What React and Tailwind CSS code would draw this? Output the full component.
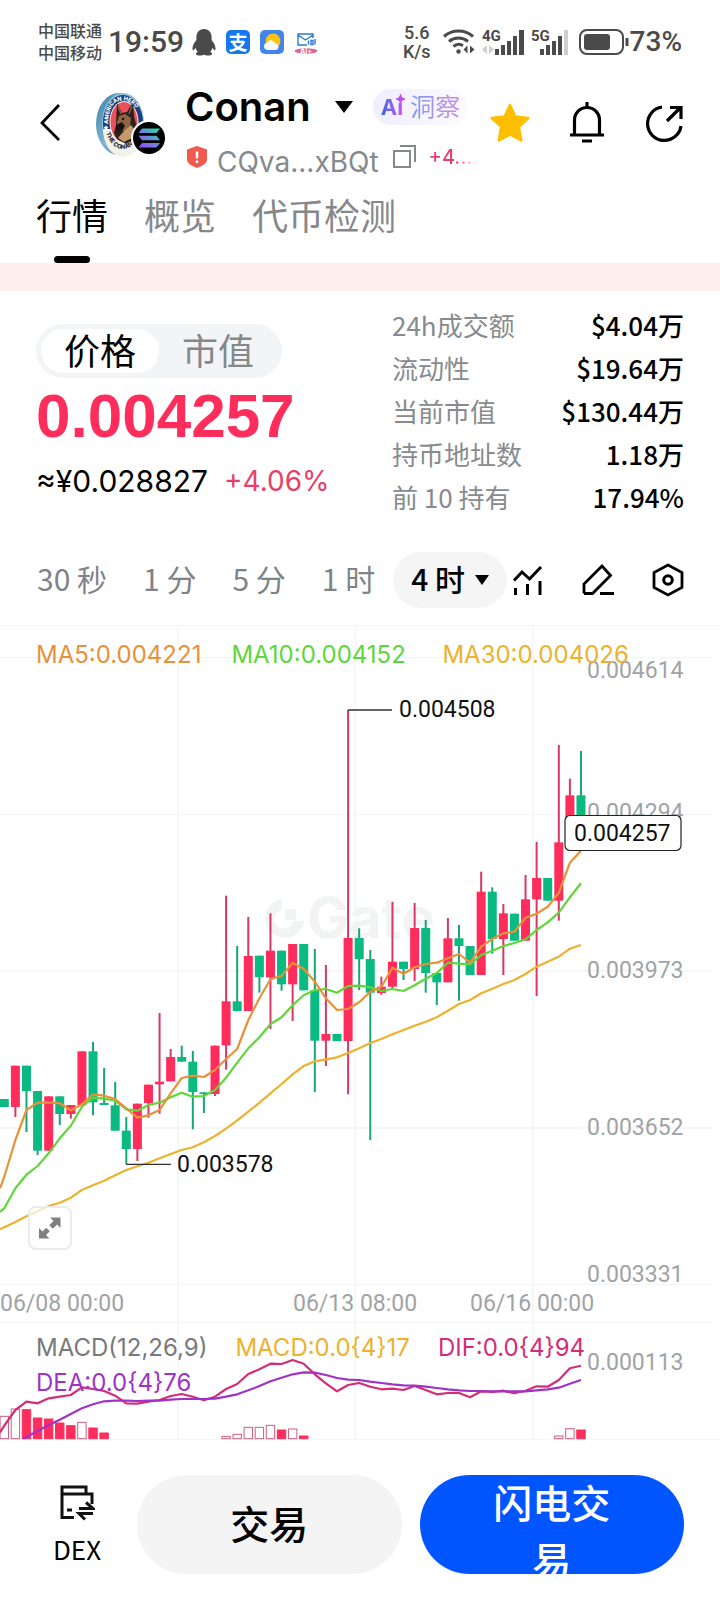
import React from 'react';

const RED = '#ff2d5c';
const GREEN = '#0aba80';
const STEP = 11.09;
const cx = (i) => 4.3 + i * STEP;
const py = (v) => 860 + v / 3;

// [rising, bodyTop, bodyBottom, high, low] in thirds of a unit, measured from y = 860
const CANDLES = [
  [0, 717, 741, 717, 741], [1, 617, 741, 617, 771], [0, 617, 693, 617, 816], [0, 693, 872, 693, 885],
  [1, 709, 872, 709, 872], [0, 709, 762, 709, 795], [1, 735, 762, 735, 776], [1, 574, 735, 574, 735],
  [0, 574, 727, 546, 766], [0, 729, 735, 624, 735], [0, 736, 812, 666, 812], [0, 812, 867, 771, 913],
  [1, 731, 867, 731, 903], [1, 674, 729, 674, 773], [1, 665, 673, 459, 761], [1, 591, 664, 567, 664],
  [0, 591, 605, 557, 605], [0, 605, 696, 573, 808], [0, 697, 702, 697, 759], [1, 557, 702, 557, 708],
  [1, 424, 556, 107, 629], [0, 424, 453, 258, 453], [1, 288, 453, 171, 453], [0, 287, 352, 287, 398],
  [1, 272, 352, 160, 507], [0, 272, 373, 272, 392], [1, 252, 373, 252, 483], [0, 252, 391, 252, 391],
  [0, 391, 542, 267, 696], [1, 522, 542, 315, 618], [0, 522, 543, 522, 543], [1, 234, 543, -450, 703],
  [0, 234, 297, 205, 390], [0, 297, 398, 270, 840], [1, 380, 399, 350, 404], [1, 305, 380, 126, 390],
  [0, 305, 327, 305, 360], [1, 204, 327, 129, 363], [0, 204, 339, 180, 398], [0, 339, 367, 339, 435],
  [1, 235, 367, 174, 367], [0, 235, 258, 195, 422], [0, 258, 345, 258, 345], [1, 95, 345, 35, 345],
  [0, 95, 237, 82, 281], [1, 160, 237, 132, 345], [0, 161, 242, 161, 242], [1, 118, 242, 45, 242],
  [1, 54, 118, -54, 408], [0, 54, 122, 54, 122], [1, -53, 122, -345, 182], [1, -194, -53, -244, -53],
  [0, -194, -82, -327, -82],
];

const MA5 = [950, 840, 750, 728, 727, 730, 751, 733, 703, 707, 717, 745, 773, 766, 750, 700, 654, 647, 651, 630, 597, 567, 480, 415, 358, 347, 309, 326, 365, 415, 450, 447, 427, 395, 380, 323, 341, 322, 312, 308, 295, 282, 308, 260, 237, 220, 215, 173, 161, 140, 98, 8, -28];
const MA10 = [1045, 985, 944, 918, 880, 835, 797, 740, 713, 716, 722, 748, 752, 735, 728, 712, 698, 710, 708, 690, 653, 608, 565, 532, 492, 472, 436, 406, 390, 387, 398, 378, 377, 382, 393, 387, 393, 376, 356, 339, 308, 311, 313, 285, 272, 258, 249, 238, 210, 187, 158, 112, 70];
const MA30 = [1102, 1086, 1069, 1054, 1038, 1028, 1013, 990, 976, 962, 946, 930, 919, 908, 895, 882, 870, 862, 847, 828, 806, 781, 755, 728, 700, 672, 643, 618, 604, 598, 592, 579, 565, 549, 537, 523, 510, 497, 485, 472, 452, 432, 420, 400, 386, 372, 360, 342, 320, 305, 290, 266, 255];
const DIF = [737, 690, 665, 670, 655, 650, 645, 622, 627, 633, 647, 670, 671, 665, 660, 648, 642, 650, 661, 650, 627, 612, 582, 568, 551, 552, 540, 551, 583, 610, 634, 615, 609, 620, 628, 626, 630, 618, 630, 643, 639, 639, 652, 634, 636, 632, 640, 632, 619, 620, 600, 565, 557];
const DEA = [null, null, 771, 753, 735, 719, 702, 685, 673, 664, 662, 662, 663, 662, 662, 659, 657, 657, 657, 656, 650, 643, 631, 618, 604, 593, 583, 577, 578, 585, 594, 599, 600, 605, 609, 613, 616, 617, 620, 624, 628, 631, 633, 633, 634, 634, 634, 634, 631, 628, 623, 611, 600];
// [index, top, filled]
const BARS = [
  [0, 709, 0], [1, 687, 0], [2, 689, 1], [3, 714, 1], [4, 717, 1], [5, 729, 1], [6, 737, 1], [7, 727, 0],
  [8, 744, 1], [9, 759, 1], [20, 769, 0], [21, 763, 0], [22, 742, 0], [23, 742, 0], [24, 736, 0],
  [25, 750, 1], [26, 747, 0], [27, 768, 1], [50, 768, 0], [51, 746, 0], [52, 750, 1],
];

const line = (values, base, lead) =>
  (lead ? lead + ' ' : '') +
  values.map((v, i) => (v === null ? '' : `${cx(i).toFixed(1)},${(base + v / 3).toFixed(1)}`)).filter(Boolean).join(' ');

function StatusBar() {
  return (
    <div className="flex h-[84px] items-center px-[38px] font-['Noto_Sans_CJK_SC',sans-serif] text-[#4a4a4a]">
      <div className="pb-[2px] text-[16px] leading-[22px] font-medium whitespace-nowrap">
        <div>中国联通</div>
        <div>中国移动</div>
      </div>
      <div className="ml-[6px] w-[76px] font-['Roboto',sans-serif] text-[30px] leading-[42px] font-medium">19:59</div>
      <div className="ml-2 flex items-center gap-[10px]">
        <svg width="24" height="28" viewBox="0 0 24 28" aria-hidden="true">
          <path fill="#4a4a4a" d="M12 1c-5 0-7.600 3.700-7.600 8.200v2.800C2.500 14.500.500 17.500.500 20.500c0 1.600.6 2 1.300 1.400.7-.5 1.300-1.400 1.700-2.100.4 1.700 1.200 3.100 2.300 4.200-1.300.5-1.900 1.100-1.900 1.800 0 1.500 2.300 1.700 4.300 1.700 1.700 0 3-.4 3.800-1.100.8.700 2.100 1.100 3.800 1.100 2 0 4.300-.2 4.300-1.700 0-.7-.6-1.300-1.900-1.800 1.100-1.100 1.900-2.500 2.300-4.200.4.700 1 1.600 1.700 2.100.7.600 1.300.2 1.300-1.400 0-3-2-6-3.900-8.500V9.200C19.600 4.700 17 1 12 1z" />
        </svg>
        <div className="flex h-6 w-6 items-center justify-center rounded-[5px] bg-[#1677ee] text-[19px] leading-6 font-bold text-white">支</div>
        <svg width="24" height="24" viewBox="0 0 24 24" aria-hidden="true">
          <rect width="24" height="24" rx="5" fill="#4284ea" />
          <circle cx="13" cy="11" r="7.500" fill="#ffc20d" />
          <path fill="#f5fbff" d="M7.500 20a3.700 3.700 0 0 1-.6-7.300 4.500 4.500 0 0 1 8.300.8A3.300 3.300 0 0 1 16 20z" />
        </svg>
        <svg width="24" height="24" viewBox="0 0 24 24" aria-hidden="true">
          <path d="M19 8V4H4v11h9M4 5l7.500 5L19 5M14.500 14.500v-4M17 14.500v-4h2v4zM21 9v5.500" fill="none" stroke="#2f7bd0" strokeWidth="1.400" />
          <ellipse cx="12" cy="21" rx="11.500" ry="2.800" fill="#d9698e" />
          <text x="6" y="23.500" fill="#fff" fontSize="7" fontWeight="700" fontFamily="Inter">AI+</text>
        </svg>
      </div>
      <div className="ml-auto flex items-center">
        <div className="text-center font-['Roboto',sans-serif] text-[18px] leading-[19px] font-medium">
          <div>5.6</div>
          <div>K/s</div>
        </div>
        <svg className="ml-3" width="32" height="26" viewBox="0 0 32 26" aria-hidden="true">
          <g fill="none" stroke="#4a4a4a" strokeWidth="3">
            <path d="M1 7.500a22 22 0 0 1 29 0" />
            <path d="M6 12.500a15 15 0 0 1 19 0" />
            <path d="M10.500 17.500a8 8 0 0 1 9.500-.8" />
          </g>
          <circle cx="15.500" cy="22.500" r="2.200" fill="#4a4a4a" />
          <path d="M24.500 16.500v8l-4-4zM27 16.500v8l4.500-4z" fill="#4a4a4a" />
        </svg>
        <svg className="ml-[7px]" width="44" height="28" viewBox="0 0 44 28" aria-hidden="true">
          <text x="0" y="13" fontSize="15" fontWeight="700" fontFamily="Roboto" fill="#4a4a4a">4G</text>
          <path d="M5 17v9l-5-4.500zM7 17v9l5-4.500z" fill="#cfcfcf" />
          <path d="M13 21h4v6h-4zM19 17h4v10h-4zM25 13h4v14h-4zM31 8h4v19h-4zM37 2h5v25h-5z" fill="#4a4a4a" />
        </svg>
        <svg className="ml-[5px]" width="39" height="28" viewBox="0 0 39 28" aria-hidden="true">
          <text x="0" y="13" fontSize="15" fontWeight="700" fontFamily="Roboto" fill="#4a4a4a">5G</text>
          <path d="M9 21h4v6H9zM15 17h4v10h-4zM21 13h4v14h-4zM27 8h4v19h-4z" fill="#4a4a4a" />
          <path d="M33 2h4v25h-4z" fill="#cfcfcf" />
        </svg>
        <svg className="ml-[9px]" width="51" height="26" viewBox="0 0 51 26" aria-hidden="true">
          <rect x="1" y="1" width="43" height="24" rx="7" fill="none" stroke="#4a4a4a" strokeWidth="2" />
          <rect x="5" y="5" width="26" height="16" rx="3" fill="#4a4a4a" />
          <path d="M48 9v8" stroke="#4a4a4a" strokeWidth="3" />
        </svg>
        <div className="font-['Roboto',sans-serif] text-[28px] leading-[42px] font-medium">73%</div>
      </div>
    </div>
  );
}

function CoinLogo() {
  return (
    <svg width="72" height="66" viewBox="0 0 72 66" aria-hidden="true">
      <defs>
        <linearGradient id="sol" x1="0" y1="1" x2="1" y2="0">
          <stop offset="0" stopColor="#9945ff" />
          <stop offset=".5" stopColor="#6d87dc" />
          <stop offset="1" stopColor="#19e6a0" />
        </linearGradient>
        <linearGradient id="rim" x1="0" y1="0" x2="1" y2="1">
          <stop offset="0" stopColor="#3f80a8" />
          <stop offset=".5" stopColor="#7db4d2" />
          <stop offset="1" stopColor="#3a7196" />
        </linearGradient>
        <path id="arcTop" d="M12 33C12.500 16 18 9.500 27 9.500s16 7 16.500 24" />
        <path id="arcLow" d="M10 42c3 9 9 15.500 16 16 8 0 14-5 17-15" />
      </defs>
      <ellipse cx="23" cy="33" rx="23" ry="31" fill="url(#rim)" />
      <ellipse cx="27" cy="32" rx="21" ry="30" fill="#8fc3dc" />
      <ellipse cx="27" cy="32" rx="20" ry="28" fill="#1d3f7d" />
      <path d="M7 38a20 28 0 0 0 40 0z" fill="#f4f1ea" />
      <ellipse cx="28" cy="31" rx="14.500" ry="21" fill="#f4f1ea" />
      <ellipse cx="28" cy="31" rx="13.500" ry="20" fill="#e9505a" />
      <path fill="#2b211d" d="m21 12 5 10 5-1 6-10 1 14 3 12-3 12-8 4-9-5-3-6 2-8z" />
      <path fill="#8f6543" d="m23 25 6-2 6 4-1 8-5 5-7-1-1-7z" />
      <path fill="#c89a6b" d="m28 40 7-6 3 4-2 9-8 4-6-4z" />
      <path fill="#1a1513" d="m20 34 6-3 3 4-3 5-6-1z" />
      <circle cx="27" cy="28" r="1.200" fill="#15100e" />
      <path d="m22 15 3 8M36 15l-3 8" stroke="#8f5d4a" strokeWidth="1.500" />
      <g fontFamily="Inter" fontWeight="800">
        <text fontSize="5.500" fill="#fff"><textPath href="#arcTop">AMERICAN HERO</textPath></text>
        <text fontSize="6" fill="#26262c"><textPath href="#arcLow">THE CONAN</textPath></text>
      </g>
      <path d="m10 34 .8 1.700 1.800.2-1.300 1.300.3 1.900L10 38.200l-1.600.9.300-1.900-1.300-1.300 1.800-.2zM44 34l.8 1.700 1.800.2-1.300 1.300z" fill="#fff" />
      <circle cx="53" cy="47" r="18" fill="#fff" />
      <circle cx="53" cy="47" r="16" fill="#000" />
      <path fill="url(#sol)" d="M46 37.500h18l-3.500 4.500h-18zM42.500 44.700h18L64 49.200H46zM46 52h18l-3.500 4.500h-18z" />
    </svg>
  );
}

function Header() {
  return (
    <header className="flex h-24 items-start justify-between pr-9 pl-9 font-['Inter','Noto_Sans_CJK_SC',sans-serif]">
      <div className="flex">
        <button type="button" aria-label="返回" className="mt-5 ml-1 h-[38px] w-5">
          <svg width="20" height="38" viewBox="0 0 20 38" fill="none" stroke="#000" strokeWidth="2.800" aria-hidden="true">
            <path d="M19 1 2 19l17 17" />
          </svg>
        </button>
        <div className="mt-[7px] ml-9"><CoinLogo /></div>
        <div className="ml-[17px] flex flex-col">
          <div className="flex h-[46px] items-center">
            <h1 className="text-[40px] leading-[46px] font-semibold">Conan</h1>
            <svg className="ml-6" width="18" height="12" viewBox="0 0 18 12" aria-hidden="true"><path d="M0 0h18L9 12z" /></svg>
            <button type="button" className="ml-5 flex h-9 items-center rounded-full bg-linear-to-r from-[#f0eefe] to-[#fdfaff] pr-2 pl-2">
              <span className="relative">
                <span className="bg-linear-to-r from-[#2b63ee] to-[#d14af0] bg-clip-text text-[22px] leading-9 font-bold text-transparent">Ai</span>
                <svg className="absolute top-[5px] -right-[2px]" width="9" height="10" viewBox="0 0 9 10" aria-hidden="true">
                  <path d="M4.500 0c.4 3 1.300 4.300 4.500 5-3.200.7-4.100 2-4.500 5C4.100 7 3.200 5.700 0 5c3.200-.7 4.100-2 4.500-5z" fill="#c24bf0" stroke="#c24bf0" />
                </svg>
              </span>
              <span className="ml-[7px] bg-linear-to-r from-[#7f9af0] to-[#c98af0] bg-clip-text text-[25px] leading-9 text-transparent">洞察</span>
            </button>
          </div>
          <div className="mt-3 flex h-10 items-center">
            <svg className="mb-[10px] ml-[2px] w-5" width="20" height="22" viewBox="0 0 20 22" aria-hidden="true">
              <path d="M10 0 20 3.500V13c0 4.500-4 6.500-10 9-6-2.500-10-4.500-10-9V3.500z" fill="#f0594e" />
              <path d="M10 5.500v7M10 14.500v2.500" stroke="#fff" strokeWidth="2.500" />
            </svg>
            <span className="ml-[10px] text-[28px] leading-10 text-[#858a8e]">CQva...xBQt</span>
            <button type="button" aria-label="复制" className="mb-[10px] ml-[14px]">
              <svg width="24" height="24" viewBox="0 0 24 24" fill="none" stroke="#85898c" strokeWidth="2" aria-hidden="true">
                <path d="M1 6h16v16H1zM7 1h15v16" />
              </svg>
            </button>
            <span className="mb-[10px] ml-3 bg-linear-to-r from-[#e63e6c] from-50% to-white bg-clip-text text-[20px] leading-7 font-medium text-transparent">+4....</span>
          </div>
        </div>
      </div>
      <div className="mt-[18px] flex gap-[37px]">
        <button type="button" aria-label="收藏">
          <svg width="40" height="40" viewBox="0 0 40 40" aria-hidden="true">
            <path d="m20 2 5.400 11.500 13 1.600-9.600 8.700 2.500 13.700L20 31.500 8.700 37.500l2.500-13.700L1.600 15.100l13-1.600z" fill="#ffbf00" stroke="#ffbf00" strokeWidth="2.500" strokeLinejoin="round" />
          </svg>
        </button>
        <button type="button" aria-label="提醒">
          <svg width="40" height="42" viewBox="0 0 40 42" fill="none" stroke="#000" strokeWidth="3.200" aria-hidden="true">
            <path d="M20 0v5M7.500 33V18a12.500 12.500 0 0 1 25 0v15M3 33h34M15 39h10" />
          </svg>
        </button>
        <button type="button" aria-label="分享">
          <svg width="40" height="42" viewBox="0 0 40 42" fill="none" stroke="#000" strokeWidth="3.200" aria-hidden="true">
            <path d="M18 5a16.800 16.800 0 1 0 19 19M23 19 36 6M26 5.500h11V17" />
          </svg>
        </button>
      </div>
    </header>
  );
}

function Tabs() {
  const tabs = ['行情', '概览', '代币检测'];
  return (
    <nav className="flex gap-9 px-9">
      {tabs.map((t, i) => (
        <button key={t} type="button" className={i === 0 ? 'flex flex-col items-center text-black' : 'flex flex-col items-center text-[#85888b]'}>
          <span className="text-[36px] leading-[68px]">{t}</span>
          <span className={i === 0 ? 'mt-2 h-[7px] w-9 rounded-full bg-black' : 'mt-2 h-[7px]'} />
        </button>
      ))}
    </nav>
  );
}

function Summary() {
  const rows = [
    ['24h成交额', '$4.04万'],
    ['流动性', '$19.64万'],
    ['当前市值', '$130.44万'],
    ['持币地址数', '1.18万'],
    ['前 10 持有', '17.94%'],
  ];
  return (
    <section className="flex h-[245px] items-start justify-between px-9">
      <div className="pt-[33px]">
        <div className="flex h-[54px] w-[246px] rounded-full bg-[#f2f4f5] p-[5px] text-[36px] leading-[40px]">
          <button type="button" className="w-[118px] rounded-full bg-white pb-2">价格</button>
          <button type="button" className="flex-1 pb-2 text-[#85888b]">市值</button>
        </div>
        <p className="font-['Liberation_Sans',sans-serif] text-[62px] leading-[76px] font-bold text-[#ff2d5c]">0.004257</p>
        <p className="flex gap-4 font-['Inter',sans-serif] leading-[54px]">
          <span className="text-[30px]">≈¥0.028827</span>
          <span className="text-[28px] text-[#e83e68]">+4.06%</span>
        </p>
      </div>
      <dl className="w-[292px] pt-3 text-[26px] leading-[43px]">
        {rows.map(([k, v]) => (
          <div key={k} className="flex justify-between">
            <dt className="text-[#888b8e]">{k}</dt>
            <dd className="font-medium">{v}</dd>
          </div>
        ))}
      </dl>
    </section>
  );
}

function Toolbar() {
  return (
    <div className="flex h-[89px] items-center justify-between pr-9 pb-[2px] pl-[37px] text-[30px] leading-[52px] text-[#808386]">
      <div className="flex items-center gap-9">
        {['30 秒', '1 分', '5 分', '1 时'].map((t) => (
          <button key={t} type="button" className="pb-1">{t}</button>
        ))}
        <button type="button" className="-ml-[18px] flex h-14 items-center gap-[10px] rounded-full bg-[#f5f5f5] px-[18px] font-medium text-black">
          <span className="pb-1">4 时</span>
          <svg width="14" height="10" viewBox="0 0 14 10" aria-hidden="true"><path d="M0 0h14L7 10z" /></svg>
        </button>
      </div>
      <div className="flex gap-[38px]">
        <button type="button" aria-label="指标">
          <svg width="32" height="32" viewBox="0 0 32 32" fill="none" stroke="#000" strokeWidth="3" aria-hidden="true">
            <path d="M2 16.500 10 8l7.500 7L29 3M3.500 24v7M15.500 20v11M28 17v14" />
          </svg>
        </button>
        <button type="button" aria-label="画线">
          <svg width="32" height="32" viewBox="0 0 32 32" fill="none" stroke="#000" strokeWidth="2.800" aria-hidden="true">
            <path d="M2 29.500V20L20 2l8.500 9.500-18 18H2M18 29.500h14" />
          </svg>
        </button>
        <button type="button" aria-label="设置">
          <svg width="32" height="34" viewBox="0 0 32 34" fill="none" stroke="#000" strokeWidth="2.800" aria-hidden="true">
            <path d="m16 2 14 7.500v15L16 32 2 24.500v-15z" />
            <circle cx="16" cy="17" r="4.300" strokeWidth="3" />
          </svg>
        </button>
      </div>
    </div>
  );
}

function PriceChart() {
  return (
    <section className="relative">
      <svg className="block h-auto w-full" viewBox="0 625 720 815" role="img" aria-label="K线图" fontFamily="Roboto, sans-serif" fontSize="23">
        <g stroke="#f4f5f5" strokeWidth="1.500">
          <path d="M0 625.500H720M0 657.500H712M0 814.500H712M0 971H712M0 1128H712M0 1284.500H712M0 1322.500H712M0 1439.500H720M178 627V1440M355.500 627V1440M533 627V1440" fill="none" />
        </g>
        <g fill="#f2f4f4">
          <path d="M282 899a19.500 19.500 0 1 0 22 22h-11a9.500 9.500 0 1 1-11-11zM285 909h11v11h-11z" />
          <text x="307" y="938" fontFamily="Inter" fontWeight="700" fontSize="56">Gate</text>
        </g>
        <g fill="#a0a3a6">
          <text x="587" y="678">0.004614</text>
          <text x="587" y="820">0.004294</text>
          <text x="587" y="978">0.003973</text>
          <text x="587" y="1135">0.003652</text>
          <text x="587" y="1282">0.003331</text>
          <text x="587" y="1370">0.000113</text>
          <text x="0" y="1311">06/08 00:00</text>
          <text x="293" y="1311">06/13 08:00</text>
          <text x="470" y="1311">06/16 00:00</text>
        </g>
        {CANDLES.map(([up, top, bottom, high, low], i) => (
          <g key={i} fill={up ? RED : GREEN}>
            <rect x={cx(i) - 1} y={py(high)} width="2" height={(low - high) / 3} fill={up ? '#d93862' : '#17a678'} />
            <rect x={cx(i) - 4.5} y={py(top)} width="9" height={(bottom - top) / 3} />
          </g>
        ))}
        <g fill="none" strokeWidth="2.200" strokeLinejoin="round">
          <polyline stroke="#ecb22e" points={line(MA30, 860, '0,1229.3')} />
          <polyline stroke="#5fd63a" points={line(MA10, 860, '0,1212')} />
          <polyline stroke="#e8913a" points={line(MA5, 860, '0,1188.3')} />
        </g>
        <path d="M348 710h44M126.300 1164.300H171" stroke="#333" strokeWidth="1.300" />
        <g fill="#111">
          <text x="399" y="717">0.004508</text>
          <text x="177" y="1172">0.003578</text>
        </g>
        <rect x="565" y="815.500" width="116" height="35" rx="5" fill="#fff" stroke="#222" strokeWidth="1.200" />
        <text x="574" y="841" fill="#111">0.004257</text>

        {BARS.map(([i, top, filled]) => (
          <rect
            key={i}
            x={cx(i) - 4.2}
            y={1180 + top / 3}
            width="8.400"
            height={(776 - top) / 3}
            fill={filled ? RED : '#fff'}
            stroke={filled ? RED : '#d0607f'}
            strokeWidth="1"
          />
        ))}
        <g fill="none" strokeWidth="2.200" strokeLinejoin="round">
          <polyline stroke="#d42c78" points={line(DIF, 1180, '0,1432.3')} />
          <polyline stroke="#a032c8" points={line(DEA, 1180, '23.300,1438.500')} />
        </g>
      </svg>
      <div className="absolute top-[14px] left-9 flex gap-[30px] font-['Inter',sans-serif] text-[24px] leading-8 whitespace-nowrap">
        <span className="text-[#e8913a]">MA5:0.004221</span>
        <span className="min-w-[181px] text-[#5fd63a]">MA10:0.004152</span>
        <span className="text-[#ecb22e]">MA30:0.004026</span>
      </div>
      <div className="absolute bottom-10 left-9 font-['Inter',sans-serif] text-[24px] leading-[35px] whitespace-nowrap">
        <div className="flex gap-7">
          <span className="text-[#77797b]">MACD(12,26,9)</span>
          <span className="text-[#ecb22e]">MACD:0.0{'{4}'}17</span>
          <span className="text-[#d42c78]">DIF:0.0{'{4}'}94</span>
        </div>
        <div className="text-[#a032c8]">DEA:0.0{'{4}'}76</div>
      </div>
      <button type="button" aria-label="全屏" className="absolute bottom-[190px] left-7 flex h-11 w-11 items-center justify-center rounded-lg border-2 border-[#ebebed] bg-white/70">
        <svg width="22" height="22" viewBox="0 0 22 22" fill="#808080" aria-hidden="true">
          <path d="M11 .500h10.500V11l-3.400-3.400-4.300 4.200-3.500-3.500 4.200-4.300zM0 11l3.500 3.400 3.700-3.700 3.600 3.500-3.800 3.800 3.500 3.500H0z" />
        </svg>
      </button>
    </section>
  );
}

function BottomBar() {
  return (
    <footer className="flex items-start px-9 pt-[35px] pb-9">
      <button type="button" className="mt-[9px] flex w-[82px] flex-col items-center">
        <svg width="36" height="38" viewBox="0 0 36 38" fill="none" stroke="#111" strokeWidth="3" aria-hidden="true">
          <path d="M15 33.500H3V3h24v7H3M27 10h6v10M8 26h5M20 24.500h14l-7-6M34 29.500H20l6 6" />
        </svg>
        <span className="mt-[11px] text-[26px] leading-8">DEX</span>
      </button>
      <div className="ml-[19px] grid flex-1 grid-cols-2 gap-[18px] text-[39px] leading-[57px] font-medium">
        <button type="button" className="h-[99px] rounded-full bg-[#f4f4f4] pb-1">交易</button>
        <button type="button" className="flex h-[99px] items-start justify-center overflow-hidden rounded-full bg-[#0055ff] px-14 text-center text-white">
          <span className="-mt-[2px]">闪电交易</span>
        </button>
      </div>
    </footer>
  );
}

export default function App() {
  return (
    <main className="overflow-hidden bg-white font-['Noto_Sans_CJK_SC',sans-serif] text-black">
      <StatusBar />
      <Header />
      <Tabs />
      <div className="h-7 bg-[#ffeeec]" />
      <Summary />
      <Toolbar />
      <PriceChart />
      <BottomBar />
    </main>
  );
}
